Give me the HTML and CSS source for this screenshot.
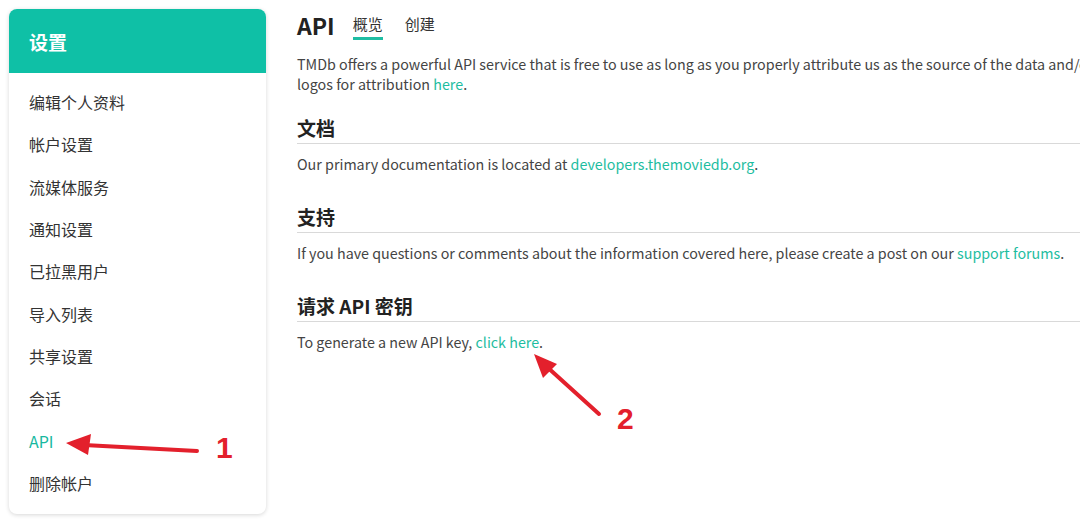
FILE: index.html
```html
<!DOCTYPE html>
<html lang="zh-CN">
<head>
<meta charset="utf-8">
<title>API 设置</title>
<link rel="stylesheet" href="styles.css">
</head>
<body>
<div class="page">
  <aside class="card">
    <div class="card-head">设置</div>
    <ul class="menu">
      <li>编辑个人资料</li>
      <li>帐户设置</li>
      <li>流媒体服务</li>
      <li>通知设置</li>
      <li>已拉黑用户</li>
      <li>导入列表</li>
      <li>共享设置</li>
      <li>会话</li>
      <li class="active">API</li>
      <li>删除帐户</li>
    </ul>
  </aside>
  <main class="content">
    <div class="title-row">
      <h1>API</h1>
      <nav class="tabs">
        <a class="tab active">概览</a>
        <a class="tab">创建</a>
      </nav>
    </div>
    <p class="intro">TMDb offers a powerful API service that is free to use as long as you properly attribute us as the source of the data and/or images you use. You can find our<br>logos for attribution <a class="link">here</a>.</p>
    <section class="block">
      <h2>文档</h2>
      <p>Our primary documentation is located at <a class="link">developers.themoviedb.org</a>.</p>
    </section>
    <section class="block">
      <h2>支持</h2>
      <p>If you have questions or comments about the information covered here, please create a post on our <a class="link">support forums</a>.</p>
    </section>
    <section class="block">
      <h2>请求 API 密钥</h2>
      <p>To generate a new API key, <a class="link">click here</a>.</p>
    </section>
  </main>
</div>
<svg class="annot" width="1080" height="522" viewBox="0 0 1080 522">
  <g stroke="#e3202c" stroke-width="4" stroke-linecap="round" fill="none">
    <line x1="197" y1="451" x2="84" y2="445"/>
    <line x1="599" y1="414" x2="546" y2="366"/>
  </g>
  <g fill="#e3202c">
    <polygon points="66,443 91,434 88,455"/>
    <polygon points="534,354 557,364 543,378"/>
  </g>
</svg>
<span class="num num1">1</span>
<span class="num num2">2</span>
</body>
</html>
```
FILE: styles.css
```css
html, body {
  margin: 0;
  padding: 0;
  background: #ffffff;
  overflow: hidden;
  width: 1080px;
  height: 522px;
}
body {
  position: relative;
  font-family: "Noto Sans CJK SC", "Noto Sans", sans-serif;
  color: #333333;
}
.page {
  display: flex;
  align-items: flex-start;
  gap: 31px;
  padding: 9px;
}
.card {
  flex: 0 0 257px;
  width: 257px;
  border-radius: 8px;
  overflow: hidden;
  background: #ffffff;
  box-shadow: 0 1px 4px rgba(0, 0, 0, 0.16);
}
.card-head {
  height: 64px;
  background: #0fc0a6;
  color: #ffffff;
  font-size: 19px;
  font-weight: 700;
  display: flex;
  align-items: center;
  padding-left: 20px;
}
.menu {
  list-style: none;
  margin: 0;
  padding: 8px 0 10px;
}
.menu li {
  height: 42.3px;
  display: flex;
  align-items: center;
  padding-left: 20px;
  font-size: 16px;
  color: #333333;
}
.menu li.active {
  color: #17b89f;
}
.content {
  flex: 0 0 1100px;
  width: 1100px;
  white-space: nowrap;
}
.title-row {
  display: flex;
  align-items: flex-end;
  gap: 18px;
  height: 31px;
}
h1 {
  margin: 0;
  font-size: 23px;
  font-weight: 700;
  line-height: 30px;
  color: #222222;
}
.tabs {
  display: flex;
  gap: 22px;
}
.tab {
  font-size: 15px;
  line-height: 22px;
  color: #333333;
  padding-bottom: 2px;
  border-bottom: 3px solid transparent;
}
.tab.active {
  border-bottom-color: #1ebda3;
}
p {
  margin: 0;
  font-size: 14.3px;
  line-height: 20px;
  color: #444444;
}
.intro {
  margin-top: 14px;
}
.link {
  color: #1ebd9f;
}
.block {
  margin-top: 21px;
}
.block + .block {
  margin-top: 30px;
}
h2 {
  margin: 0 0 10px;
  font-size: 19px;
  font-weight: 700;
  line-height: 26px;
  color: #222222;
  border-bottom: 1px solid #d9d9d9;
  padding-bottom: 2px;
}
.annot {
  position: absolute;
  left: 0;
  top: 0;
  pointer-events: none;
}
.num {
  position: absolute;
  font-family: "Liberation Sans", Arial, sans-serif;
  font-weight: 700;
  font-size: 30px;
  line-height: 30px;
  color: #e3202c;
}
.num1 {
  left: 216px;
  top: 433px;
}
.num2 {
  left: 617px;
  top: 404px;
}
```
